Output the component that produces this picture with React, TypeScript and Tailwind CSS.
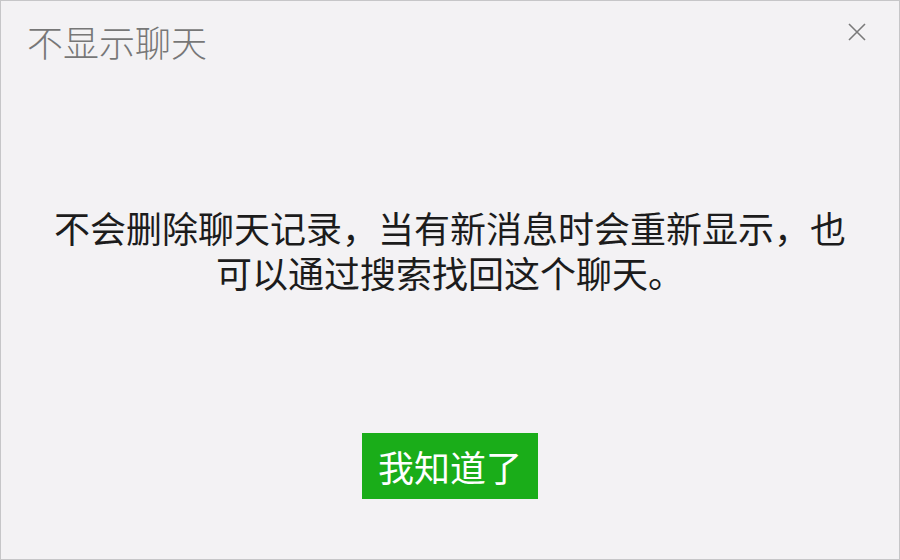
import React from 'react';

export default function App() {
  return (
    <div
      className="w-[900px] h-[560px] bg-[#f3f2f4] border border-[#c6c6c8] flex flex-col"
      style={{ fontFamily: '"Noto Sans CJK SC", "Noto Sans", sans-serif' }}
    >
      <div className="flex items-start justify-between pl-[26px] pr-[32px] pt-[16px]">
        <h1 className="text-[36px] leading-[48px] font-light text-[#777777]">不显示聊天</h1>
        <button className="mt-[5px] text-[#7a7a7a]" aria-label="close">
          <svg width="20" height="20" viewBox="0 0 20 20" fill="none" stroke="currentColor" strokeWidth="1.6">
            <path d="M2 2 L18 18 M18 2 L2 18" />
          </svg>
        </button>
      </div>

      <div className="mt-[140px] flex flex-col items-center text-[36px] leading-[45px] text-[#1c1c1c]">
        <p>不会删除聊天记录，当有新消息时会重新显示，也</p>
        <p>可以通过搜索找回这个聊天。</p>
      </div>

      <div className="flex justify-center mt-[138px]">
        <button className="w-[176px] h-[66px] bg-[#1aad19] text-white text-[36px] leading-none">
          我知道了
        </button>
      </div>
    </div>
  );
}
